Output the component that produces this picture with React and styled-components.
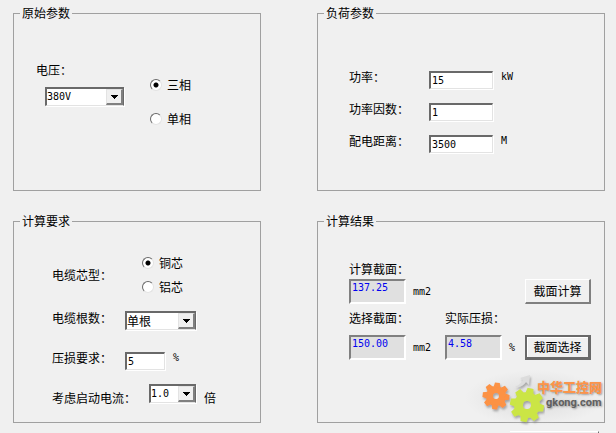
import React, { Component } from "react";
import styled, { createGlobalStyle } from "styled-components";

const GlobalStyle = createGlobalStyle`
  * {
    box-sizing: border-box;
  }

  body {
    margin: 0;
    background: #f0f0f0;
    color: #000;
    font: 12px/16px "DejaVu Sans Mono", "Noto Sans CJK SC", monospace;
    overflow: hidden;
  }
`;

const cjk = `"Noto Sans CJK SC", sans-serif`;
const latin = `"DejaVu Sans Mono", "Noto Sans CJK SC", monospace`;

const Page = styled.main`
  padding: 5px 11px 0 13px;
`;

const Panels = styled.form`
  display: grid;
  grid-template-columns: 248fr 288fr;
  column-gap: 56px;
  row-gap: 22px;
`;

const Group = styled.fieldset`
  position: relative;
  min-width: 0;
  margin: 0;
  padding: 0;
  border: 1px solid #a0a0a0;
`;

const Legend = styled.legend`
  margin-left: 6px;
  padding: 0 2px;
  font: 12px/16px ${cjk};
`;

const VoltageBody = styled.div`
  display: grid;
  grid-template-columns: 114px 1fr;
  padding: 41px 0 62px 22px;
`;

const Voltage = styled.div`
  display: flex;
  flex-direction: column;
  gap: 8px;
`;

const Indent = styled.div`
  padding-left: 9px;
`;

const LoadBody = styled.div`
  display: flex;
  flex-direction: column;
  gap: 12px;
  padding: 48px 0 37px 31px;
`;

const DemandBody = styled.div`
  display: grid;
  grid-template-rows: 55px 40px 33px 24px;
  padding: 26px 0 15px 38px;
`;

const ResultBody = styled.div`
  display: grid;
  grid-template-columns: 96px 80px 66px;
  grid-template-rows: 18px 31px 25px 25px;
  align-items: start;
  padding: 32px 0 62px 31px;
`;

const Row = styled.div`
  display: grid;
  grid-template-columns: ${props => props.$label}px auto 1fr;
  column-gap: 8px;
  align-items: start;
  align-self: start;
`;

const CenteredRow = styled(Row)`
  align-items: center;
`;

const Label = styled.label`
  font: 12px/16px ${cjk};
  white-space: nowrap;
`;

const LowLabel = styled(Label)`
  margin-top: 7px;
`;

const CalculatedLabel = styled(Label)`
  grid-column: 1 / -1;
`;

const Unit = styled.span`
  font: 10px/16px ${latin};
`;

const RadioList = styled.div`
  display: flex;
  flex-direction: column;
  gap: ${props => props.$gap}px;
  padding-top: ${props => props.$top || 0}px;
`;

const RadioLabel = styled.label`
  display: flex;
  align-items: center;
  gap: 5px;
  font: 12px/16px ${cjk};
`;

const Radio = styled.input.attrs({ type: "radio" })`
  appearance: none;
  width: 12px;
  height: 12px;
  margin: 0;
  border: 1px solid;
  border-color: #696969 #e3e3e3 #e3e3e3 #696969;
  border-radius: 50%;
  background: #fff;

  &:checked {
    background: radial-gradient(circle, #000 2px, #fff 3px);
  }
`;

const Input = styled.input`
  width: ${props => props.$width}px;
  height: 18px;
  margin: 2px 0 0;
  padding: 0 0 0 1px;
  border: solid;
  border-width: 2px 1px 1px 2px;
  border-color: #696969 #e3e3e3 #e3e3e3 #696969;
  border-radius: 0;
  background: #fff;
  box-shadow: 1px 1px 0 #fff;
  color: #000;
  font: 10px/14px ${latin};
`;

const SelectBox = styled.div`
  position: relative;
  width: ${props => props.$width}px;
  height: 19px;
  margin-top: 1px;
`;

const NativeSelect = styled.select`
  appearance: none;
  display: block;
  width: 100%;
  height: 100%;
  padding: 0 18px 0 0;
  border: solid;
  border-width: 2px 1px 1px 2px;
  border-color: #696969 #696969 #e3e3e3 #696969;
  border-radius: 0;
  background: #fff;
  box-shadow: 1px 1px 0 #fff;
  color: #000;
  font: ${props => (props.$cjk ? `12px/16px ${cjk}` : `10px/14px ${latin}`)};
`;

const Arrow = styled.span`
  position: absolute;
  top: 2px;
  right: 1px;
  bottom: 1px;
  display: flex;
  align-items: center;
  justify-content: center;
  width: 17px;
  border: solid;
  border-width: 1px 2px 2px 1px;
  border-color: #e3e3e3 #808080 #808080 #e3e3e3;
  background: #f0f0f0;
  pointer-events: none;
`;

const Output = styled.output`
  width: 57px;
  height: 25px;
  padding-left: 1px;
  border: 2px solid;
  border-color: #808080 #fff #fff #808080;
  background: #e0e0e0;
  color: #0000f0;
  font: 10px/14px ${latin};
`;

const Result = styled.div`
  display: flex;
  align-items: center;
  gap: 7px;
`;

const SelectedResult = styled(Result)`
  grid-column: 1;
`;

const Button = styled.button`
  grid-column: 3;
  height: 25px;
  padding: 0;
  border: solid;
  border-width: ${props => (props.$default ? "2px 3px 3px 2px" : "1px 2px 2px 1px")};
  border-color: ${props =>
    props.$default ? "#696969" : "#fff #808080 #808080 #fff"};
  border-radius: 0;
  background: #f0f0f0;
  box-shadow: ${props => (props.$default ? "inset 1px 1px 0 #fff" : "none")};
  color: #000;
  font: 12px/16px ${cjk};
`;

const Brand = styled.div`
  position: absolute;
  right: 0;
  bottom: -4px;
  display: flex;
  align-items: center;
  padding: 0 2px 0 16px;
  background: radial-gradient(closest-side, #dcdcdc, #dcdcdc00);
`;

const BrandText = styled.div`
  display: flex;
  flex-direction: column;
  margin-left: -8px;
  padding-bottom: 6px;
  text-shadow: 1px 1px 2px #999;
`;

const BrandName = styled.span`
  color: #fc944a;
  font: 900 13px/15px "Liberation Sans", ${cjk};
`;

const BrandSite = styled.span`
  padding-left: 9px;
  color: #606060;
  font: bold 11px/15px Roboto, sans-serif;
`;

const Footer = styled.footer`
  display: flex;
  justify-content: flex-end;
  padding: 8px 6px 0 0;
`;

const FooterEdge = styled.div`
  width: 89px;
  height: 2px;
  border-top: 1px solid #fff;
  border-right: 1px solid #696969;
`;

const Select = ({ id, width, options, cjk: wide }) => (
  <SelectBox $width={width}>
    <NativeSelect id={id} $cjk={wide} defaultValue={options[0]}>
      {options.map(option => (
        <option key={option}>{option}</option>
      ))}
    </NativeSelect>
    <Arrow>
      <svg width="7" height="4" viewBox="0 0 7 4" shapeRendering="crispEdges">
        <path d="M0 0h7v1H6v1H5v1H4v1H3V3H2V2H1V1H0z" />
      </svg>
    </Arrow>
  </SelectBox>
);

const TEETH = [0, 45, 90, 135, 180, 225, 270, 315];

const Gear = ({ x, y, r, hole, tooth, turn, color }) => (
  <g transform={`translate(${x} ${y}) rotate(${turn})`}>
    <circle r={(r + hole) / 2} fill="none" stroke={color} strokeWidth={r - hole} />
    {TEETH.map(angle => (
      <path
        key={angle}
        d={`M${-tooth} ${1 - r}L${1 - tooth} ${-r - tooth}H${tooth - 1}L${tooth} ${1 - r}z`}
        fill={color}
        transform={`rotate(${angle})`}
      />
    ))}
  </g>
);

const Logo = () => (
  <svg width="64" height="56" viewBox="0 0 64 56" aria-hidden="true">
    <defs>
      <filter id="logo-shadow" x="-20%" y="-20%" width="150%" height="150%">
        <feDropShadow dx="1" dy="2" stdDeviation="1" floodColor="#777" floodOpacity="0.6" />
      </filter>
    </defs>
    <g filter="url(#logo-shadow)">
      <path d="M34 17q5-2 8-7l-3-2 10-3-1 10-3-3q-4 6-11 5z" fill="#dcdcdc" />
      <Gear x={15} y={26} r={10} hole={3} tooth={3.4} turn={6} color="#fc9244" />
      <Gear x={46} y={35} r={13} hole={4} tooth={4} turn={12} color="#cbe545" />
    </g>
  </svg>
);

class App extends Component {
  render() {
    return (
      <React.Fragment>
        <GlobalStyle />
        <Page>
          <Panels onSubmit={event => event.preventDefault()}>
            <Group>
              <Legend>原始参数</Legend>
              <VoltageBody>
                <Voltage>
                  <Label htmlFor="voltage">电压：</Label>
                  <Indent>
                    <Select id="voltage" width={79} options={["380V", "220V"]} />
                  </Indent>
                </Voltage>
                <RadioList $gap={18} $top={15}>
                  <RadioLabel>
                    <Radio name="phase" defaultChecked />
                    三相
                  </RadioLabel>
                  <RadioLabel>
                    <Radio name="phase" />
                    单相
                  </RadioLabel>
                </RadioList>
              </VoltageBody>
            </Group>

            <Group>
              <Legend>负荷参数</Legend>
              <LoadBody>
                <Row $label={72}>
                  <Label htmlFor="power">功率：</Label>
                  <Input id="power" $width={64} defaultValue="15" />
                  <Unit>kW</Unit>
                </Row>
                <Row $label={72}>
                  <Label htmlFor="factor">功率因数：</Label>
                  <Input id="factor" $width={64} defaultValue="1" />
                </Row>
                <Row $label={72}>
                  <Label htmlFor="distance">配电距离：</Label>
                  <Input id="distance" $width={64} defaultValue="3500" />
                  <Unit>M</Unit>
                </Row>
              </LoadBody>
            </Group>

            <Group>
              <Legend>计算要求</Legend>
              <DemandBody>
                <CenteredRow $label={82}>
                  <Label as="span">电缆芯型：</Label>
                  <RadioList $gap={8}>
                    <RadioLabel>
                      <Radio name="core" defaultChecked />
                      铜芯
                    </RadioLabel>
                    <RadioLabel>
                      <Radio name="core" />
                      铝芯
                    </RadioLabel>
                  </RadioList>
                </CenteredRow>
                <Row $label={65}>
                  <Label htmlFor="count">电缆根数：</Label>
                  <Select id="count" width={71} options={["单根", "双根"]} cjk />
                </Row>
                <Row $label={65}>
                  <Label htmlFor="loss">压损要求：</Label>
                  <Input id="loss" $width={40} defaultValue="5" />
                  <Unit>%</Unit>
                </Row>
                <Row $label={89}>
                  <LowLabel htmlFor="start">考虑启动电流：</LowLabel>
                  <Select id="start" width={47} options={["1.0", "1.5", "2.0"]} />
                  <LowLabel as="span">倍</LowLabel>
                </Row>
              </DemandBody>
            </Group>

            <Group>
              <Legend>计算结果</Legend>
              <ResultBody>
                <CalculatedLabel htmlFor="calculated">计算截面：</CalculatedLabel>
                <Result>
                  <Output id="calculated">137.25</Output>
                  <Unit>mm2</Unit>
                </Result>
                <Button type="button">截面计算</Button>
                <Label htmlFor="selected">选择截面：</Label>
                <Label htmlFor="actual">实际压损：</Label>
                <SelectedResult>
                  <Output id="selected">150.00</Output>
                  <Unit>mm2</Unit>
                </SelectedResult>
                <Result>
                  <Output id="actual">4.58</Output>
                  <Unit>%</Unit>
                </Result>
                <Button type="submit" $default>
                  截面选择
                </Button>
              </ResultBody>
              <Brand>
                <Logo />
                <BrandText>
                  <BrandName>中华工控网</BrandName>
                  <BrandSite>gkong.com</BrandSite>
                </BrandText>
              </Brand>
            </Group>
          </Panels>
          <Footer>
            <FooterEdge />
          </Footer>
        </Page>
      </React.Fragment>
    );
  }
}

export default App;
